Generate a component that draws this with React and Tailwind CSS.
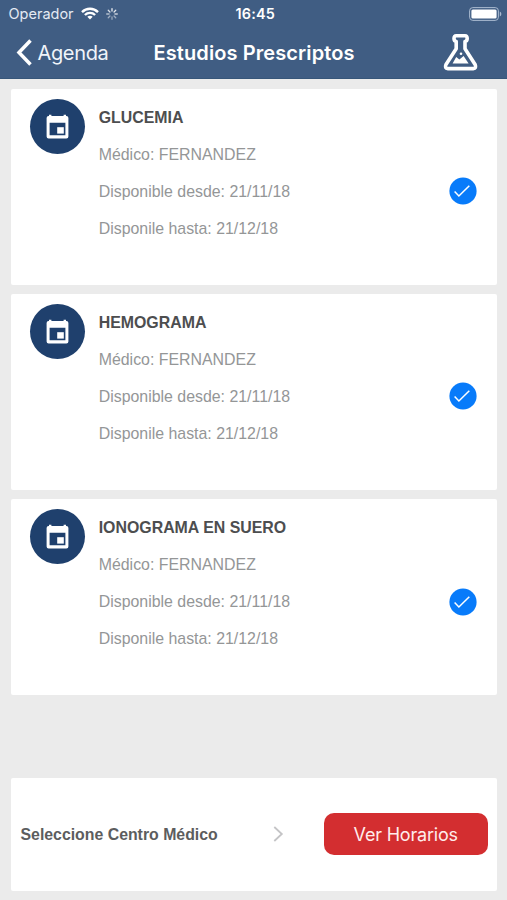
const studies = ['GLUCEMIA', 'HEMOGRAMA', 'IONOGRAMA EN SUERO'];

function Wifi() {
  return (
    <svg className="ml-[7px] h-[13px] w-[18px]" viewBox="0 0 18 13" fill="none" stroke="white" strokeWidth="2.4">
      <path d="M1 5.1C5.5.7 12.5.7 17 5.1" />
      <path d="M3.9 8C6.8 5.2 11.2 5.2 14.1 8" />
      <path d="M9 12.4 6.3 9.7C7.8 8.4 10.2 8.4 11.7 9.7Z" fill="white" stroke="none" />
    </svg>
  );
}

function Spinner() {
  const opacities = [0.9, 0.85, 0.7, 0.5, 0.45, 0.5, 0.6, 0.8];
  return (
    <svg className="ml-[7px] h-3 w-3" viewBox="-6 -6 12 12" stroke="white" strokeWidth="1.3" strokeLinecap="round">
      {opacities.map((o, i) => (
        <path key={i} d="M0-2.9V-5.3" opacity={o} transform={`rotate(${i * 45})`} />
      ))}
    </svg>
  );
}

function Battery() {
  return (
    <svg className="h-[14px] w-[33px]" viewBox="0 0 33 14">
      <rect x=".6" y=".6" width="28.8" height="12.8" rx="3.2" fill="none" stroke="#a9bad0" strokeWidth="1" />
      <rect x="2.4" y="2.4" width="25.2" height="9.2" rx="1.5" fill="white" />
      <path d="M30.8 4.6Q32.4 5.4 32.4 7T30.8 9.4Z" fill="#a9bad0" />
    </svg>
  );
}

function Flask() {
  return (
    <svg className="-mt-[2px] h-[38px] w-[35px]" viewBox="0 0 35 38" fill="none" stroke="white" strokeWidth="3.6" strokeLinejoin="round" strokeLinecap="round">
      <path d="M13.2 8.6Q11 8.2 11 5.6 11 2.7 13.2 2.7H22Q24.2 2.7 24.2 5.6 24.2 8.2 22 8.6V15.8L32.1 31.4Q33.7 35.4 30.2 35.6H4.9Q1.4 35.4 3 31.4L13.2 15.8Z" />
      <path d="M9.6 30.4 13.2 24 16.4 26.4 20.6 23 25.6 30.4Z" fill="white" stroke="none" />
      <circle cx="18" cy="20.8" r="1.3" fill="white" stroke="none" />
    </svg>
  );
}

function CalendarBadge() {
  return (
    <div className="flex h-[55px] w-[55px] shrink-0 items-center justify-center rounded-full bg-[#1f406d]">
      <svg className="h-[25px] w-[23px]" viewBox="0 0 23 25">
        <path fillRule="evenodd" fill="white" d="M3 .8H5.4V2.1H17.6V.8H20V2.1H20.4Q22.4 2.1 22.4 4V22.4Q22.4 24.4 20.4 24.4H2.6Q.6 24.4.6 22.4V4Q.6 2.1 2.6 2.1H3ZM3.6 8.7V21.2H19.4V8.7Z" />
        <rect x="11.2" y="13.2" width="6.6" height="6.4" fill="white" />
      </svg>
    </div>
  );
}

function StudyCard({ name }) {
  return (
    <article className="flex h-[196px] rounded-[2px] bg-white pt-[10px] pl-[19.5px] pr-[20.5px]">
      <CalendarBadge />
      <div className="ml-[13.7px] flex-1 whitespace-nowrap text-[15.9px] leading-[37.1px] text-[#949697]">
        <h2 className="font-bold text-[#4d4e4f]">{name}</h2>
        <p>Médico: FERNANDEZ</p>
        <p>Disponible desde: 21/11/18</p>
        <p>Disponile hasta: 21/12/18</p>
      </div>
      <svg className="mt-[78.5px] h-[28px] w-[28px]" viewBox="0 0 28 28" fill="none">
        <circle cx="14" cy="14" r="13.6" fill="#087bfa" />
        <path d="m5.6 14.6 4.3 4.4L20.3 8.8" stroke="white" strokeWidth="1.5" />
      </svg>
    </article>
  );
}

export default function App() {
  return (
    <div className="flex h-[900px] w-[507px] flex-col overflow-hidden bg-[#ebebeb] font-['Liberation_Sans',Arial,sans-serif]">
      <header className="h-[79px] shrink-0 border-b border-[#375679] bg-[#405d83] font-['Inter',sans-serif] text-white">
        <div className="grid h-[27px] grid-cols-[1fr_auto_1fr] items-center pl-[8.5px] pr-[5px]">
          <div className="flex items-center">
            <span className="text-[14.5px] text-[#e4eaf3]">Operador</span>
            <Wifi />
            <Spinner />
          </div>
          <span className="text-[14.4px] font-semibold tracking-[0.2px]">16:45</span>
          <div className="flex justify-end"><Battery /></div>
        </div>
        <div className="grid h-[51px] grid-cols-[138px_1fr_64px] items-center">
          <button className="flex items-center pl-4 text-[20px] leading-[26px] tracking-[-0.35px] text-[#f0f4fa]">
            <svg className="mr-[5.5px] h-[27px] w-[16px]" viewBox="0 0 16 27" fill="none" stroke="white" strokeWidth="3.5">
              <path d="M14.5 1.5 3 13.5 14.5 25.5" />
            </svg>
            Agenda
          </button>
          <h1 className="whitespace-nowrap pl-[15.5px] text-[20px] font-semibold leading-[26px] tracking-[0.1px]">Estudios Prescriptos</h1>
          <Flask />
        </div>
      </header>
      <main className="flex flex-col gap-[9.3px] pt-[9.5px] pl-[10.5px] pr-[10px]">
        {studies.map((name) => <StudyCard key={name} name={name} />)}
      </main>
      <footer className="mt-auto mr-[10px] mb-[9.5px] ml-[10.5px] flex h-[112.5px] items-center rounded-[2px] bg-white pl-[10px] pr-[9.3px]">
        <span className="mt-[2px] whitespace-nowrap text-[15.85px] font-bold text-[#5c5d5e]">Seleccione Centro Médico</span>
        <svg className="ml-auto h-4 w-[11px]" viewBox="0 0 11 16" fill="none" stroke="#c4c4c6" strokeWidth="1.8">
          <path d="m1.3 1 7.5 7-7.5 7" />
        </svg>
        <button className="ml-[40px] h-[42px] w-[164px] rounded-[10px] bg-[#d32e30] font-['Inter',sans-serif] text-[18px] tracking-[-0.2px] text-[#ffeceb]">Ver Horarios</button>
      </footer>
    </div>
  );
}
